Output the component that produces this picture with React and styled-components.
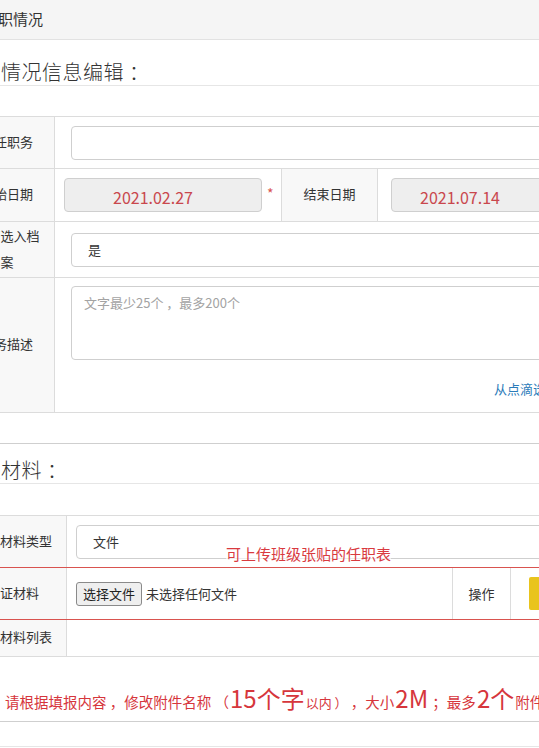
import React from 'react';
import styled, { createGlobalStyle } from 'styled-components';

const GlobalStyle = createGlobalStyle`
  html, body {
    margin: 0;
    padding: 0;
    background: #fff;
    overflow: hidden;
  }
  body {
    font-family: "Noto Sans CJK SC", "Noto Sans", "Liberation Sans", sans-serif;
    color: #333;
    font-size: 13px;
  }
  * { box-sizing: border-box; }
`

const Page = styled.div`
  width: 640px;
  margin-left: -40px;
`

const HeaderBar = styled.div`
  height: 40px;
  line-height: 37px;
  padding-left: 23px;
  font-size: 15px;
  background: #f5f5f5;
  border-bottom: 1px solid #e2e2e2;
`

const SectionTitle = styled.div`
  padding-top: ${props => props.top}px;
  line-height: 26px;
  font-size: 20px;
  font-weight: 300;
  letter-spacing: 0.5px;
  color: #333;
  border-bottom: 1px solid #e6e6e6;
`

const Divider = styled.div`
  margin-top: 30px;
  border-top: 1px solid #cfcfcf;
`

const Table = styled.div`
  margin-top: ${props => props.top}px;
  border-top: 1px solid #dcdcdc;
`

const Row = styled.div`
  position: relative;
  display: flex;
  height: ${props => props.h}px;
  border-bottom: 1px solid ${props => props.marked ? '#d9534f' : '#dcdcdc'};
  ${props => props.marked && 'border-top: 1px solid #d9534f; margin-top: -1px;'}
`

const Label = styled.div`
  width: ${props => props.w}px;
  flex-shrink: 0;
  display: flex;
  align-items: center;
  justify-content: center;
  padding: 0 10px 2px;
  text-align: center;
  line-height: 26px;
  background: #f8f8f8;
  border-right: 1px solid #dcdcdc;
  ${props => props.bordered && 'border-left: 1px solid #dcdcdc;'}
`

const Value = styled.div`
  flex: ${props => props.fixed ? 'none' : 1};
  display: flex;
  flex-direction: ${props => props.column ? 'column' : 'row'};
  align-items: ${props => props.column ? 'stretch' : 'center'};
  padding-left: ${props => props.pad}px;
  padding-top: ${props => props.column ? 8 : 0}px;
`

const TextInput = styled.div`
  flex: 1;
  height: 34px;
  display: flex;
  align-items: center;
  padding-left: ${props => props.indent || 16}px;
  border: 1px solid #cfcfcf;
  border-radius: 4px;
  background: #fff;
`

const DateInput = styled.div`
  width: ${props => props.w ? props.w + 'px' : 'auto'};
  flex: ${props => props.w ? 'none' : 1};
  height: 34px;
  display: flex;
  align-items: center;
  padding-top: 4px;
  padding-left: ${props => props.indent}px;
  font-size: 16px;
  color: #c9474d;
  background: #eeeeee;
  border: 1px solid #cfcfcf;
  border-radius: 4px;
`

const Star = styled.div`
  width: 19px;
  flex-shrink: 0;
  padding-left: 5px;
  padding-bottom: 4px;
  display: flex;
  align-items: center;
  color: #d9534f;
  font-size: 14px;
`

const TextArea = styled.div`
  height: 74px;
  padding: 6px 12px;
  line-height: 20px;
  color: #a3a3a3;
  border: 1px solid #cfcfcf;
  border-radius: 4px;
`

const PickLink = styled.div`
  margin-top: 19px;
  padding-right: 41px;
  text-align: right;
  color: #2b7bb9;
`

const FileButton = styled.button`
  height: 24px;
  padding: 0 6px;
  font-family: inherit;
  font-size: 13px;
  color: #222;
  background: #efefef;
  border: 1px solid #8a8a8a;
  border-radius: 3px;
`

const FileName = styled.span`
  margin-left: 4px;
`

const OpCell = styled.div`
  width: 58px;
  display: flex;
  align-items: center;
  justify-content: center;
  border-left: 1px solid #dcdcdc;
`

const ActionCell = styled.div`
  width: 90px;
  display: flex;
  align-items: center;
  padding-left: 18px;
  border-left: 1px solid #dcdcdc;
`

const YellowButton = styled.div`
  width: 72px;
  height: 33px;
  border-radius: 2px;
  background: #e9c41d;
`

const Annotation = styled.div`
  position: absolute;
  left: 266px;
  top: 28px;
  font-size: 15px;
  line-height: 20px;
  color: #d93a3f;
  background: rgba(255,255,255,0.6);
`

const Note = styled.div`
  height: 65px;
  padding-top: 26px;
  padding-left: 45px;
  line-height: 30px;
  white-space: nowrap;
  font-size: 14.5px;
  color: #d6363c;
  border-bottom: 1px solid #cfcfcf;
`

const Big = styled.span`
  font-size: 24px;
  margin: 0 1px;
`

const Small = styled.span`
  font-size: 13px;
`

const Footer = styled.div`
  height: 25px;
  border-bottom: 1px solid #e6e6e6;
`

const App = () => (
  <Page>
    <GlobalStyle />
    <HeaderBar>任职情况</HeaderBar>
    <SectionTitle top={19}>任职情况信息编辑 ：</SectionTitle>

    <Table top={30}>
      <Row h={52}>
        <Label w={95}>担任职务</Label>
        <Value pad={16}><TextInput /></Value>
      </Row>
      <Row h={53}>
        <Label w={95}>开始日期</Label>
        <Value pad={9} fixed>
          <DateInput w={198} indent={48}>2021.02.27</DateInput>
        </Value>
        <Star>*</Star>
        <Label w={97} bordered>结束日期</Label>
        <Value pad={13}>
          <DateInput indent={28}>2021.07.14</DateInput>
        </Value>
      </Row>
      <Row h={56}>
        <Label w={95}>是否选入档案</Label>
        <Value pad={16}><TextInput>是</TextInput></Value>
      </Row>
      <Row h={135}>
        <Label w={95}>任务描述</Label>
        <Value pad={16} column>
          <TextArea>文字最少25个 ，最多200个</TextArea>
          <PickLink>从点滴选取</PickLink>
        </Value>
      </Row>
    </Table>

    <Divider />
    <SectionTitle top={13}>佐证材料 ：</SectionTitle>

    <Table top={31}>
      <Row h={52}>
        <Label w={107}>佐证材料类型</Label>
        <Value pad={9}><TextInput>文件</TextInput></Value>
        <Annotation>可上传班级张贴的任职表</Annotation>
      </Row>
      <Row h={53} marked>
        <Label w={107}>佐证材料</Label>
        <Value pad={9}>
          <FileButton>选择文件</FileButton>
          <FileName>未选择任何文件</FileName>
        </Value>
        <OpCell>操作</OpCell>
        <ActionCell><YellowButton /></ActionCell>
      </Row>
      <Row h={37}>
        <Label w={107}>佐证材料列表</Label>
        <Value pad={9} />
      </Row>
    </Table>

    <Note>
      请根据填报内容 ，修改附件名称 （<Big>15个字</Big><Small>以内 ）</Small> ，大小<Big>2M</Big> ；最多<Big>2个</Big>附件
    </Note>
    <Footer />
  </Page>
);

export default App;
